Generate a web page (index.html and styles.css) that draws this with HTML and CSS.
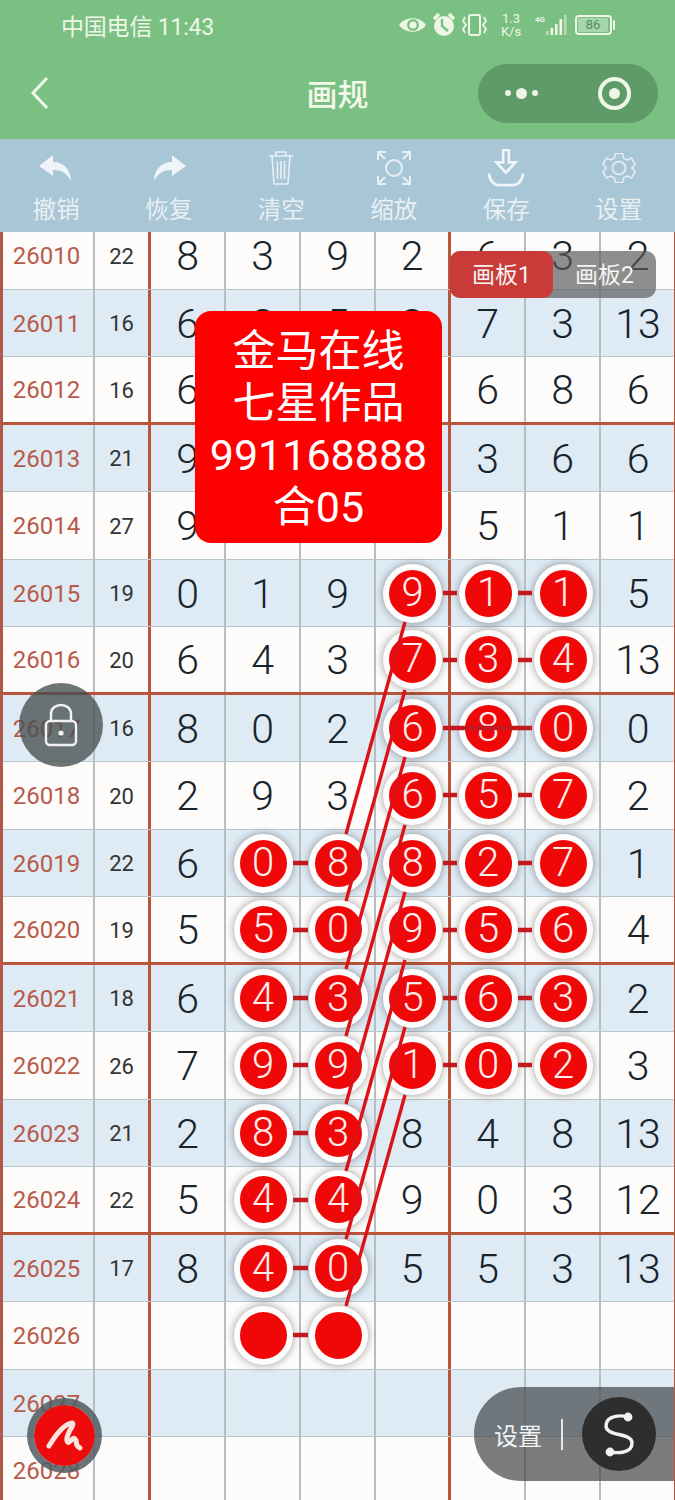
FILE: index.html
```html
<!DOCTYPE html>
<html lang="zh">
<head>
<meta charset="utf-8">
<title>画规</title>
<link rel="stylesheet" href="styles.css">
</head>
<body>
<div class="page">
  <header class="topbar">
    <div class="status">
      <span class="carrier">中国电信 11:43</span>
      <div class="status-icons">
        <svg class="si" width="27" height="20" viewBox="0 0 27 20"><path d="M0 10C6 1 21 1 27 10C21 19 6 19 0 10Z" fill="#eef6e6"/><circle cx="14" cy="10" r="6" fill="#7bc083"/><circle cx="14" cy="10" r="3.6" fill="#eef6e6"/></svg>
        <svg class="si" width="24" height="26" viewBox="0 0 24 26"><circle cx="12" cy="14" r="10" fill="#eef6e6"/><path d="M10 7V14L16 19" stroke="#7bc083" stroke-width="2.4" fill="none"/><path d="M2 7L7 2M22 7L17 2" stroke="#eef6e6" stroke-width="3.4"/></svg>
        <svg class="si" width="25" height="24" viewBox="0 0 25 24"><rect x="7" y="2" width="11" height="20" rx="2" fill="none" stroke="#eef6e6" stroke-width="2"/><path d="M3 4L1 8L4 12L1 16L3 20M22 4L24 8L21 12L24 16L22 20" fill="none" stroke="#eef6e6" stroke-width="1.8"/></svg>
        <span class="speed"><span>1.3</span><span>K/s</span></span>
        <svg class="si" width="32" height="24" viewBox="0 0 32 24"><text x="0" y="9" class="net">4G</text><g fill="#eef6e6"><rect x="11" y="18" width="2.6" height="4" opacity=".5"/><rect x="15.5" y="15" width="2.6" height="7"/><rect x="20" y="11" width="2.6" height="11"/><rect x="24.5" y="6" width="2.6" height="16"/><rect x="29" y="2" width="2.6" height="20" opacity=".5"/></g></svg>
        <span class="battery"><span class="battery-fill">86</span></span>
        <i class="battery-tip"></i>
      </div>
    </div>
    <div class="nav">
      <svg class="back" width="20" height="34" viewBox="0 0 20 34"><path d="M17 2L3 17L17 32" fill="none" stroke="#f2f8ea" stroke-width="3"/></svg>
      <span class="title">画规</span>
      <div class="capsule">
        <span class="dots"><i></i><b></b><i></i></span>
        <span class="target"></span>
      </div>
    </div>
  </header>
  <nav class="tools">
    <div class="tool">
      <svg width="36" height="36" viewBox="0 0 36 36"><path d="M15 5L1 16L15 26V20C23 20 29 23 33 31C33 20 26 12 15 12Z" fill="#eef4f7"/></svg>
      <span>撤销</span>
    </div>
    <div class="tool">
      <svg width="36" height="36" viewBox="0 0 36 36"><path d="M21 5L35 16L21 26V20C13 20 7 23 3 31C3 20 10 12 21 12Z" fill="#eef4f7"/></svg>
      <span>恢复</span>
    </div>
    <div class="tool">
      <svg width="36" height="36" viewBox="0 0 36 36" fill="none" stroke="#e8f0f4" stroke-width="1.6"><path d="M6 6H30M13 6V2H23V6M9 6L11 34H25L27 6M14.500 11V29M18 11V29M21.500 11V29"/></svg>
      <span>清空</span>
    </div>
    <div class="tool">
      <svg width="36" height="36" viewBox="0 0 36 36" fill="none" stroke="#e8f0f4" stroke-width="2"><circle cx="18" cy="18" r="8"/><path d="M2 10V2H10M26 2H34V10M2 26V34H10M26 34H34V26M2 2L9 9M34 2L27 9M2 34L9 27M34 34L27 27"/></svg>
      <span>缩放</span>
    </div>
    <div class="tool">
      <svg width="40" height="40" viewBox="0 0 40 40" fill="none" stroke="#f0f5f8" stroke-width="2.8"><path d="M17 1H23V14H30L20 25L10 14H17Z"/><path d="M2 26C3 35 9 38 12 38H28C31 38 37 35 38 26"/></svg>
      <span>保存</span>
    </div>
    <div class="tool">
      <svg width="36" height="36" viewBox="0 0 36 36" fill="none" stroke="#e8f0f4" stroke-width="1.6"><path d="M14 2H22L23 7L27 9L32 7L36 14L32 18L36 22L32 29L27 27L23 29L22 34H14L13 29L9 27L4 29L0 22L4 18L0 14L4 7L9 9L13 7Z" transform="translate(1.8 1.8) scale(.9)"/><circle cx="18" cy="18" r="6.5"/></svg>
      <span>设置</span>
    </div>
  </nav>
  <main class="board">
    <div class="rows">
      <div class="row"><span class="no">26010</span><span class="sum">22</span><span>8</span><span>3</span><span>9</span><span class="brk">2</span><span>6</span><span>3</span><span>2</span></div>
      <div class="row alt"><span class="no">26011</span><span class="sum">16</span><span>6</span><span>8</span><span>5</span><span class="brk">8</span><span>7</span><span>3</span><span>13</span></div>
      <div class="row sep"><span class="no">26012</span><span class="sum">16</span><span>6</span><span></span><span></span><span class="brk"></span><span>6</span><span>8</span><span>6</span></div>
      <div class="row alt"><span class="no">26013</span><span class="sum">21</span><span>9</span><span></span><span></span><span class="brk"></span><span>3</span><span>6</span><span>6</span></div>
      <div class="row"><span class="no">26014</span><span class="sum">27</span><span>9</span><span></span><span></span><span class="brk"></span><span>5</span><span>1</span><span>1</span></div>
      <div class="row alt"><span class="no">26015</span><span class="sum">19</span><span>0</span><span>1</span><span>9</span><span class="brk"><b class="ball">9</b></span><span><b class="ball">1</b></span><span><b class="ball">1</b></span><span>5</span></div>
      <div class="row sep"><span class="no">26016</span><span class="sum">20</span><span>6</span><span>4</span><span>3</span><span class="brk"><b class="ball">7</b></span><span><b class="ball">3</b></span><span><b class="ball">4</b></span><span>13</span></div>
      <div class="row alt"><span class="no">26017</span><span class="sum">16</span><span>8</span><span>0</span><span>2</span><span class="brk"><b class="ball">6</b></span><span><b class="ball">8</b></span><span><b class="ball">0</b></span><span>0</span></div>
      <div class="row"><span class="no">26018</span><span class="sum">20</span><span>2</span><span>9</span><span>3</span><span class="brk"><b class="ball">6</b></span><span><b class="ball">5</b></span><span><b class="ball">7</b></span><span>2</span></div>
      <div class="row alt"><span class="no">26019</span><span class="sum">22</span><span>6</span><span><b class="ball">0</b></span><span><b class="ball">8</b></span><span class="brk"><b class="ball">8</b></span><span><b class="ball">2</b></span><span><b class="ball">7</b></span><span>1</span></div>
      <div class="row sep"><span class="no">26020</span><span class="sum">19</span><span>5</span><span><b class="ball">5</b></span><span><b class="ball">0</b></span><span class="brk"><b class="ball">9</b></span><span><b class="ball">5</b></span><span><b class="ball">6</b></span><span>4</span></div>
      <div class="row alt"><span class="no">26021</span><span class="sum">18</span><span>6</span><span><b class="ball">4</b></span><span><b class="ball">3</b></span><span class="brk"><b class="ball">5</b></span><span><b class="ball">6</b></span><span><b class="ball">3</b></span><span>2</span></div>
      <div class="row"><span class="no">26022</span><span class="sum">26</span><span>7</span><span><b class="ball">9</b></span><span><b class="ball">9</b></span><span class="brk"><b class="ball">1</b></span><span><b class="ball">0</b></span><span><b class="ball">2</b></span><span>3</span></div>
      <div class="row alt"><span class="no">26023</span><span class="sum">21</span><span>2</span><span><b class="ball">8</b></span><span><b class="ball">3</b></span><span class="brk">8</span><span>4</span><span>8</span><span>13</span></div>
      <div class="row sep"><span class="no">26024</span><span class="sum">22</span><span>5</span><span><b class="ball">4</b></span><span><b class="ball">4</b></span><span class="brk">9</span><span>0</span><span>3</span><span>12</span></div>
      <div class="row alt"><span class="no">26025</span><span class="sum">17</span><span>8</span><span><b class="ball">4</b></span><span><b class="ball">0</b></span><span class="brk">5</span><span>5</span><span>3</span><span>13</span></div>
      <div class="row"><span class="no">26026</span><span class="sum"></span><span></span><span><b class="ball"></b></span><span><b class="ball"></b></span><span class="brk"></span><span></span><span></span><span></span></div>
      <div class="row alt"><span class="no">26027</span><span class="sum"></span><span></span><span></span><span></span><span class="brk"></span><span></span><span></span><span></span></div>
      <div class="row"><span class="no">26028</span><span class="sum"></span><span></span><span></span><span></span><span class="brk"></span><span></span><span></span><span></span></div>
    </div>
    <svg class="links" width="675" height="1268" viewBox="0 232 675 1268" fill="none">
      <g stroke-width="3.4" stroke="#dc1218">
        <path d="M405 622L346 834M405 690L346 901M405 757L346 969M405 825L346 1036M405 892L346 1104M405 960L346 1171M405 1027L346 1239M405 1095L346 1306"/>
      </g>
      <g stroke-width="4.500" stroke="#c4181e">
        <path d="M443 593H457M518 593H532M443 660H457M518 660H532M443 728H532"/>
        <path d="M443 795H457M518 795H532M293 863H308M443 863H457M518 863H532"/>
        <path d="M293 930H308M443 930H457M518 930H532M293 998H308M443 998H457M518 998H532"/>
        <path d="M293 1065H308M443 1065H457M518 1065H532M293 1133H308M293 1200H308M293 1268H308M293 1335H308"/>
      </g>
    </svg>
    <div class="promo">金马在线<br>七星作品<br>991168888<br>合05</div>
    <div class="tabs">
      <span class="tab tab-on">画板1</span>
      <span class="tab">画板2</span>
    </div>
    <div class="lock">
      <svg width="36" height="44" viewBox="0 0 36 44" fill="none" stroke="#f2f2f2" stroke-width="2.4"><path d="M8 18V11C8 -1 28 -1 28 11V18"/><rect x="3" y="18" width="30" height="24" rx="4"/><circle cx="18" cy="30" r="2.6" fill="#f2f2f2" stroke="none"/></svg>
    </div>
    <div class="pen">
      <svg width="44" height="36" viewBox="0 0 44 36" fill="none" stroke="#fbe4dc" stroke-width="5" stroke-linecap="round" stroke-linejoin="round"><path d="M6 28C12 18 20 6 29 5C33 6 22 16 24 23C26 28 29 18 32 21C35 24 31 27 37 30"/></svg>
    </div>
    <div class="dock">
      <span class="dock-label">设置</span>
      <i class="dock-bar"></i>
      <span class="dock-btn">
        <svg width="40" height="48" viewBox="0 0 40 48" fill="none" stroke="#f2f2f2" stroke-width="3.4"><path d="M29 7C22 5 7 5 7 16C7 27 33 22 33 33C33 44 18 43 11 42"/><circle cx="29" cy="7" r="4.400" fill="#f2f2f2" stroke="none"/><circle cx="11" cy="42" r="4.400" fill="#f2f2f2" stroke="none"/></svg>
      </span>
    </div>
  </main>
</div>
</body>
</html>
```
FILE: styles.css
```css
* { box-sizing: border-box; }
html, body { margin: 0; padding: 0; }
body {
  width: 675px;
  height: 1500px;
  overflow: hidden;
  background: #fdfdfd;
  font-family: Roboto, "Noto Sans CJK SC", sans-serif;
}
.page { display: flex; flex-direction: column; width: 675px; height: 1500px; }

.topbar { height: 139px; flex: none; background: #7bc083; color: #eef6e6; }
.status {
  height: 50px;
  display: flex;
  align-items: center;
  justify-content: space-between;
  padding: 0 60px 0 61px;
}
.carrier { font-size: 23px; letter-spacing: -0.2px; }
.status-icons { display: flex; align-items: center; gap: 6px; }
.si { display: block; }
.net { font: 700 8px Roboto, sans-serif; fill: #eef6e6; }
.speed { display: flex; flex-direction: column; align-items: center; font-size: 13px; line-height: 13px; width: 26px; margin: 0 5px; }
.battery { width: 37px; height: 20px; border: 2px solid #eef6e6; border-radius: 4px; padding: 1px; display: flex; margin-left: 2px; }
.battery-fill { width: 30px; background: #a6d6ac; border-radius: 2px; color: #4f8f5a; font-size: 13px; line-height: 14px; text-align: center; }
.battery-tip { width: 2px; height: 10px; background: #eef6e6; margin-left: -5px; border-radius: 1px; }

.nav { height: 89px; display: flex; align-items: center; position: relative; padding: 0 17px 3px 30px; }
.back { display: block; }
.title { position: absolute; left: 0; right: 0; top: 28px; text-align: center; font-size: 31px; line-height: 36px; font-weight: 500; color: #f2f8ea; }
.capsule { margin-left: auto; width: 180px; height: 59px; border-radius: 30px; background: #5f9b68; display: flex; align-items: center; padding-left: 27px; gap: 57px; }
.dots { display: flex; align-items: center; gap: 5px; width: 36px; }
.dots i { width: 6px; height: 6px; border-radius: 50%; background: #eef6e6; }
.dots b { width: 11px; height: 11px; border-radius: 50%; background: #eef6e6; }
.target { width: 33px; height: 33px; border-radius: 50%; border: 4px solid #eef6e6; position: relative; display: flex; align-items: center; justify-content: center; }
.target::after { content: ""; width: 11px; height: 11px; border-radius: 50%; background: #eef6e6; }

.tools { height: 93px; flex: none; background: #a9c6d6; display: flex; }
.tool { flex: 1; display: flex; flex-direction: column; align-items: center; color: #e8f0f4; font-size: 23.5px; line-height: 30px; }
.tool svg { display: block; margin-top: 10px; height: 38px; flex: none; }
.tool span { margin-top: 8px; }

.board { flex: 1; position: relative; overflow: hidden; border-left: 3px solid #b0584a; border-right: 1px solid #b8553a; margin: 0; }
.rows { margin: -10px -1px 0 -3px; }
.row { display: grid; grid-template-columns: 95px 56px repeat(6, 75px) 74px; height: 67.5px; background: #fdfcfb; border-bottom: 1px solid #b9c6cc; }
.row.alt { background: #deeaf4; }
.row.sep { border-bottom: 3px solid #b8553a; }
.row > span { display: flex; align-items: center; justify-content: center; padding-top: 2px; border-right: 2px solid #b7bec2; font-size: 41px; font-weight: 300; color: #18242c; position: relative; }
.row > span:nth-child(1) { padding-left: 0; }
.row > span:nth-child(2), .row > span.brk { border-right: 3px solid #b8553a; }
.row > span:last-child { border-right: 0; }
.row > .no { font-size: 24px; font-weight: 400; color: #b85a4a; }
.row > .sum { font-size: 22px; font-weight: 400; color: #333; }
.ball {
  position: absolute;
  left: 50%;
  top: 50%;
  width: 59px;
  height: 59px;
  margin: -29px 0 0 -29px;
  border: 6px solid #fdfdfd;
  border-radius: 50%;
  background: #f00808;
  color: #fdeeee;
  font-weight: 300;
  font-size: 40px;
  line-height: 46px;
  text-align: center;
  box-shadow: 0 0 9px rgba(0, 0, 0, .4);
  z-index: 1;
}
.links { position: absolute; left: -3px; top: 0; z-index: 2; }

.promo {
  position: absolute;
  left: 192px;
  top: 79px;
  width: 247px;
  height: 232px;
  border-radius: 16px;
  background: #ff0000;
  color: #fff;
  font-size: 43px;
  line-height: 52px;
  text-align: center;
  padding-top: 14px;
  z-index: 3;
}
.tabs { position: absolute; left: 447px; top: 19px; width: 206px; height: 47px; display: flex; border-radius: 10px; background: rgba(90, 90, 90, .68); z-index: 3; }
.tab { flex: 1; display: flex; align-items: center; justify-content: center; color: #f4f4f4; font-size: 23px; padding-bottom: 4px; }
.tab-on { background: #c93a38; border-radius: 10px; }

.lock { position: absolute; left: 16px; top: 451px; width: 84px; height: 84px; border-radius: 50%; background: rgba(70, 78, 80, .78); display: flex; align-items: center; justify-content: center; z-index: 3; }
.pen { position: absolute; left: 24px; top: 1166px; width: 75px; height: 75px; border-radius: 50%; border: 7px solid rgba(80, 90, 95, .85); background: #ee0b0b; background-clip: padding-box; display: flex; align-items: center; justify-content: center; z-index: 3; }
.dock { position: absolute; left: 471px; top: 1155px; width: 201px; height: 94px; border-radius: 47px 0 0 47px; background: rgba(66, 70, 72, .7); display: flex; align-items: center; padding-left: 20px; z-index: 3; }
.dock-label { color: #f2f2f2; font-size: 24px; }
.dock-bar { width: 2px; height: 31px; background: #e8e8e8; margin-left: 19px; }
.dock-btn { width: 74px; height: 74px; border-radius: 50%; background: #2e2e2e; margin-left: 19px; display: flex; align-items: center; justify-content: center; }
.dock-btn svg { display: block; }
```
